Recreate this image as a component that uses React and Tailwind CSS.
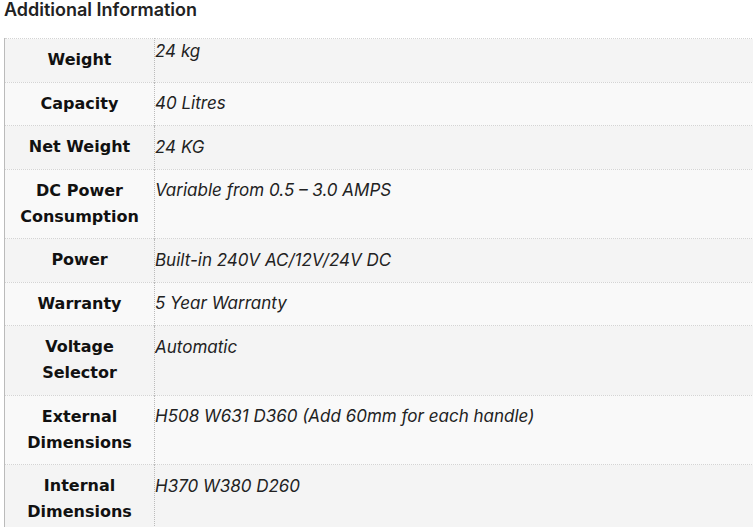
export default function App() {
  const rows = [
    ["Weight", "24 kg"],
    ["Capacity", "40 Litres"],
    ["Net Weight", "24 KG"],
    ["DC Power Consumption", "Variable from 0.5 – 3.0 AMPS"],
    ["Power", "Built-in 240V AC/12V/24V DC"],
    ["Warranty", "5 Year Warranty"],
    ["Voltage Selector", "Automatic"],
    ["External Dimensions", "H508 W631 D360 (Add 60mm for each handle)"],
    ["Internal Dimensions", "H370 W380 D260"],
  ];
  return (
    <div className="bg-white text-[#111] font-['Inter',sans-serif] min-h-[527px] overflow-hidden">
      <h2 className="pl-[4px] pt-0 text-[18px] leading-[19px] font-semibold text-[#222]">Additional Information</h2>
      <table className="ml-[4px] mt-[19px] w-[760px] border-collapse border-l border-[#bbb] text-[16px] leading-[26px]">
        <tbody>
          {rows.map(([k, v], i) => (
            <tr key={k} className={i % 2 === 0 ? "bg-[#f4f4f4]" : "bg-[#f9f9f9]"}>
              <th className="w-[150px] border-t border-dotted border-t-[#d4d4d4] border-r border-r-[#bbb] px-[12px] py-[8.25px] text-center align-middle font-['DejaVu_Sans',sans-serif] font-bold text-[#111]">
                {k}
              </th>
              <td
                className={
                  i === 0
                    ? "border-t border-dotted border-t-[#d4d4d4] p-0 align-top italic text-[17px] text-[#222] leading-[24px]"
                    : "border-t border-dotted border-t-[#d4d4d4] px-0 pt-[7.5px] pb-0 align-top italic text-[17px] text-[#222] leading-[26px]"
                }
              >
                {v}
              </td>
            </tr>
          ))}
        </tbody>
      </table>
    </div>
  );
}
